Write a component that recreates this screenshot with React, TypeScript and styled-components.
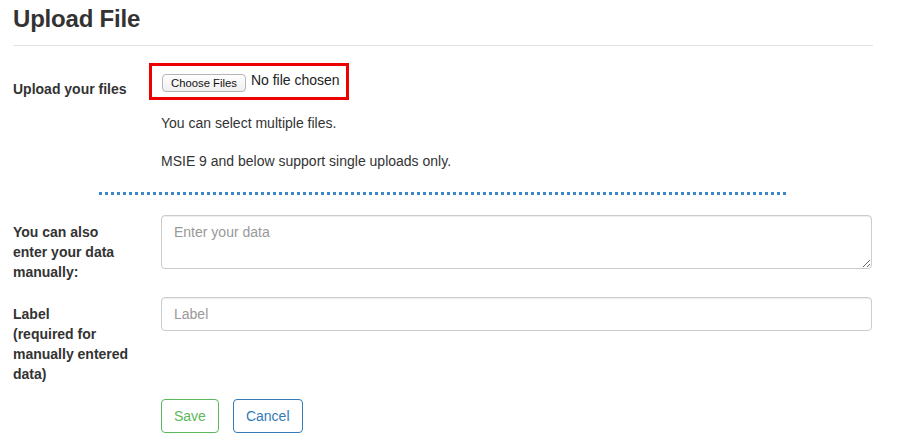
import React from "react";
import styled, { createGlobalStyle } from "styled-components";

const GlobalStyle = createGlobalStyle`
  html, body {
    margin: 0;
    padding: 0;
    background: #ffffff;
  }
  body {
    font-family: "Liberation Sans", Arial, sans-serif;
    font-size: 14px;
    line-height: 20px;
    color: #333333;
  }
  * { box-sizing: border-box; }
`;

const Page = styled.div`
  width: 860px;
  margin-left: 13px;
  display: flex;
  flex-direction: column;
`;

const Title = styled.h1`
  margin: 6px 0 0;
  font-size: 24px;
  line-height: 26px;
  font-weight: 700;
  letter-spacing: -0.2px;
  color: #333333;
`;

const Rule = styled.hr`
  margin: 13px 0 0;
  border: 0;
  border-top: 1px solid #e3e3e3;
  height: 0;
`;

const Form = styled.form`
  display: flex;
  flex-direction: column;
`;

const Row = styled.div<{ $top?: number; $bottom?: number }>`
  display: flex;
  align-items: flex-start;
  margin-top: ${(p) => p.$top ?? 0}px;
  margin-bottom: ${(p) => p.$bottom ?? 0}px;
`;

const Label = styled.label<{ $pad?: number }>`
  flex: 0 0 148px;
  padding-top: ${(p) => p.$pad ?? 7}px;
  padding-right: 28px;
  font-weight: 700;
  font-size: 14px;
  line-height: 20px;
  color: #333333;
`;

const Control = styled.div`
  flex: 0 0 711px;
  display: flex;
  flex-direction: column;
  align-items: flex-start;
`;

const Highlight = styled.div`
  width: 200px;
  height: 37px;
  margin-left: -12px;
  border: 3px solid #ec0000;
  padding: 5px 6px 0 10px;
  display: flex;
  align-items: flex-start;
  gap: 5px;
`;

const FileButton = styled.button`
  margin-top: 3px;
  height: 18px;
  padding: 0 8px;
  border: 1px solid #b4b4b4;
  border-radius: 4px;
  background: linear-gradient(#ffffff, #efefef);
  font-family: "Liberation Sans", Arial, sans-serif;
  font-size: 11.3px;
  line-height: 16px;
  color: #111111;
  display: flex;
  align-items: center;
  white-space: nowrap;
`;

const FileStatus = styled.span`
  font-size: 14px;
  line-height: 18px;
  color: #222222;
  white-space: nowrap;
`;

const Help = styled.p<{ $top: number }>`
  margin: ${(p) => p.$top}px 0 0;
  font-size: 14px;
  line-height: 20px;
  color: #333333;
`;

const Dotted = styled.div`
  align-self: center;
  width: 688px;
  height: 3px;
  margin-top: 21px;
  background: repeating-linear-gradient(
    to right,
    #3f87c8 0,
    #3f87c8 3px,
    transparent 3px,
    transparent 6px
  );
`;

const fieldBase = `
  width: 711px;
  border: 1px solid #cccccc;
  border-radius: 4px;
  padding: 6px 12px;
  font-family: "Liberation Sans", Arial, sans-serif;
  font-size: 14px;
  line-height: 20px;
  color: #555555;
  background: #ffffff;
  box-shadow: inset 0 1px 1px rgba(0, 0, 0, 0.075);
  outline: none;
  &::placeholder { color: #999999; }
`;

const TextArea = styled.textarea`
  ${fieldBase}
  height: 54px;
  display: block;
  resize: vertical;
`;

const TextInput = styled.input`
  ${fieldBase}
  height: 34px;
  display: block;
`;

const Actions = styled.div`
  display: flex;
  gap: 14px;
  margin-left: 148px;
`;

const OutlineButton = styled.button<{ $color: string }>`
  height: 34px;
  padding: 6px 12px;
  border: 1px solid ${(p) => p.$color};
  border-radius: 4px;
  background: #ffffff;
  color: ${(p) => p.$color};
  font-family: "Liberation Sans", Arial, sans-serif;
  font-size: 14px;
  line-height: 20px;
  cursor: pointer;
`;

export default function App() {
  return (
    <>
      <GlobalStyle />
      <Page>
        <Title>Upload File</Title>
        <Rule />
        <Form onSubmit={(e) => e.preventDefault()}>
          <Row $top={17}>
            <Label $pad={16}>Upload your files</Label>
            <Control>
              <Highlight>
                <FileButton type="button">Choose Files</FileButton>
                <FileStatus>No file chosen</FileStatus>
              </Highlight>
              <Help $top={13}>You can select multiple files.</Help>
              <Help $top={18}>MSIE 9 and below support single uploads only.</Help>
            </Control>
          </Row>
          <Dotted />
          <Row $top={20} $bottom={15}>
            <Label>You can also enter your data manually:</Label>
            <Control>
              <TextArea placeholder="Enter your data" rows={2} />
            </Control>
          </Row>
          <Row $bottom={15}>
            <Label>
              Label
              <br />
              (required for manually entered data)
            </Label>
            <Control>
              <TextInput type="text" placeholder="Label" />
            </Control>
          </Row>
          <Actions>
            <OutlineButton type="submit" $color="#5cb85c">Save</OutlineButton>
            <OutlineButton type="button" $color="#337ab7">Cancel</OutlineButton>
          </Actions>
        </Form>
      </Page>
    </>
  );
}
